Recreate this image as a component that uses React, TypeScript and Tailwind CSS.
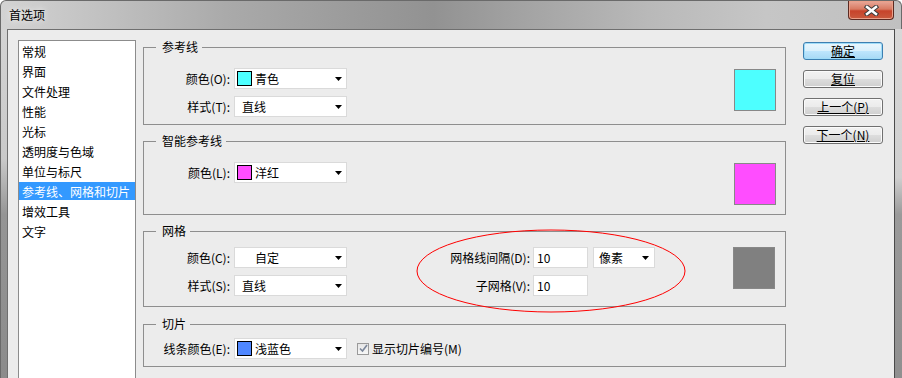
import React from "react";

const listItems = [
  "常规",
  "界面",
  "文件处理",
  "性能",
  "光标",
  "透明度与色域",
  "单位与标尺",
  "参考线、网格和切片",
  "增效工具",
  "文字",
];

function Arrow() {
  return (
    <svg width="7" height="4" viewBox="0 0 7 4" className="shrink-0">
      <path d="M0 0H7L3.5 4Z" fill="#000" />
    </svg>
  );
}

function Select({ swatch, text, blank }: { swatch?: string; text: string; blank?: boolean }) {
  return (
    <div className="flex h-[21px] w-[113px] items-center border border-[#dadada] bg-white pr-[4px]">
      {swatch || blank ? (
        <>
          <div
            className={"ml-[2px] h-[15px] w-[15px] shrink-0 " + (swatch ? "border border-black" : "")}
            style={swatch ? { backgroundColor: swatch } : undefined}
          />
          <span className="ml-[3px]">{text}</span>
        </>
      ) : (
        <span className="ml-[7px]">{text}</span>
      )}
      <div className="ml-auto">
        <Arrow />
      </div>
    </div>
  );
}

function Label({ children }: { children: React.ReactNode }) {
  return <div className="w-[90px] shrink-0 pr-[4px] text-right">{children}</div>;
}

function Group({ title, className, children }: { title: string; className: string; children: React.ReactNode }) {
  return (
    <fieldset className={"border border-[#8e8e8e] " + className}>
      <legend className="ml-[12px] pl-[6px] pr-[4px] leading-[16px]">{title}</legend>
      {children}
    </fieldset>
  );
}

function Swatch({ color }: { color: string }) {
  return (
    <div
      className="ml-auto mr-[9px] mt-[1px] h-[42px] w-[42px] shrink-0 border border-[#888888]"
      style={{ backgroundColor: color }}
    />
  );
}

function Button({ label, primary }: { label: string; primary?: boolean }) {
  return (
    <button
      className={
        primary
          ? "flex h-[18px] w-[80px] items-center justify-center rounded-[3px] border border-[#3c7fb1] bg-[linear-gradient(180deg,#eaf6fd_0%,#d9f0fc_50%,#bee6fd_51%,#a7d9f5_100%)] shadow-[inset_0_0_0_1px_#9fdcf8]"
          : "flex h-[18px] w-[80px] items-center justify-center rounded-[3px] border border-[#707070] bg-[linear-gradient(180deg,#f2f2f2_0%,#ebebeb_50%,#dddddd_51%,#cfcfcf_100%)] shadow-[inset_0_0_0_1px_#fbfbfb]"
      }
    >
      <span className="leading-[14px] underline decoration-1 underline-offset-[1px]">{label}</span>
    </button>
  );
}

export default function App() {
  return (
    <div className="relative flex h-[378px] w-[902px] flex-col overflow-hidden bg-white text-[12px] leading-[16px] text-black [font-family:'Noto_Sans_CJK_SC',sans-serif]">
      {/* Title bar */}
      <div className="flex h-[29px] shrink-0 rounded-t-[6px] border-t border-l border-r border-[#6a6a6a] bg-[linear-gradient(90deg,#d3d3d3_0%,#c0c0c0_12%,#aaaaaa_25%,#9c9c9c_38%,#929292_48%,#a3a3a3_58%,#b9b9b9_72%,#c6c6c6_85%,#c0c0c0_100%)]">
        <span className="self-center pl-[8px] [text-shadow:0_0_6px_#ffffff]">首选项</span>
        <div className="ml-auto mr-[7px] flex h-[19px] w-[46px] items-center justify-center rounded-b-[4px] border border-t-0 border-[#5b2a22] bg-[linear-gradient(180deg,#e9a99a_0%,#d87a62_45%,#c7432b_55%,#c95a3e_100%)] shadow-[inset_0_0_0_1px_#eaa08a]">
          <svg width="15" height="11" viewBox="0 0 15 11">
            <path d="M3 2L12 9M12 2L3 9" stroke="#3b3b3b" strokeWidth="4.5" strokeLinecap="square" />
            <path d="M3 2L12 9M12 2L3 9" stroke="#ffffff" strokeWidth="2.5" strokeLinecap="square" />
          </svg>
        </div>
      </div>

      <div className="flex flex-1">
        {/* left frame */}
        <div className="w-[7px] shrink-0 border-l border-[#6a6a6a] bg-[linear-gradient(180deg,#d4d4d4_0%,#c9c9c9_35%,#959595_50%,#8a8a8a_100%)]" />

        {/* client */}
        <div className="flex flex-1 items-start border-l border-t border-[#6f6f6f] bg-[#ececec] pl-[10px]">
          {/* category list */}
          <div className="mt-[10px] h-[360px] w-[118px] shrink-0 border border-[#8c8c8c] bg-white pt-[1px]">
            {listItems.map((item, i) => (
              <div
                key={item}
                className={
                  i === 7
                    ? "mb-[2px] h-[18px] whitespace-nowrap bg-[#3399ff] pl-[3px] leading-[20px] text-white"
                    : "mb-[2px] h-[18px] whitespace-nowrap pl-[3px] leading-[20px]"
                }
              >
                {item}
              </div>
            ))}
          </div>

          {/* groups */}
          <div className="ml-[7px] mt-[9px] flex w-[643px] shrink-0 flex-col gap-2">
            <Group title="参考线" className="pt-[13px] pb-[7px]">
              <div className="flex items-start">
                <div className="flex flex-col gap-[7px]">
                  <div className="flex h-[21px] items-center">
                    <Label>颜色(O):</Label>
                    <Select swatch="#4dffff" text="青色" />
                  </div>
                  <div className="flex h-[21px] items-center">
                    <Label>样式(T):</Label>
                    <Select text="直线" />
                  </div>
                </div>
                <Swatch color="#4dffff" />
              </div>
            </Group>

            <Group title="智能参考线" className="pt-[13px] pb-[9px]">
              <div className="flex items-start">
                <div className="flex h-[21px] items-center">
                  <Label>颜色(L):</Label>
                  <Select swatch="#ff4dff" text="洋红" />
                </div>
                <Swatch color="#ff4dff" />
              </div>
            </Group>

            <Group title="网格" className="pt-[8px] pb-[10px]">
              <div className="flex items-start">
                <div className="flex flex-col gap-[7px]">
                  <div className="flex h-[21px] items-center">
                    <Label>颜色(C):</Label>
                    <Select blank text="自定" />
                  </div>
                  <div className="flex h-[21px] items-center">
                    <Label>样式(S):</Label>
                    <Select text="直线" />
                  </div>
                </div>
                <div className="ml-[86px] flex flex-col gap-[7px]">
                  <div className="flex h-[21px] items-center">
                    <div className="w-[100px] shrink-0 pr-[3px] text-right">网格线间隔(D):</div>
                    <div className="flex h-[21px] w-[55px] items-center border border-[#dadada] bg-white pl-[3px]">10</div>
                    <div className="ml-[5px] flex h-[21px] w-[62px] items-center border border-[#dadada] bg-white pl-[5px] pr-[5px]">
                      <span>像素</span>
                      <div className="ml-auto">
                        <Arrow />
                      </div>
                    </div>
                  </div>
                  <div className="flex h-[21px] items-center">
                    <div className="w-[100px] shrink-0 pr-[3px] text-right">子网格(V):</div>
                    <div className="flex h-[21px] w-[55px] items-center border border-[#dadada] bg-white pl-[3px]">10</div>
                  </div>
                </div>
                <div className="ml-auto mr-[10px] h-[42px] w-[42px] shrink-0 border border-[#888888] bg-[#808080]" />
              </div>
            </Group>

            <Group title="切片" className="mt-[1px] pt-[6px] pb-[7px]">
              <div className="flex h-[21px] items-center">
                <Label>线条颜色(E):</Label>
                <Select swatch="#4f87ff" text="浅蓝色" />
                <div className="ml-[10px] flex h-[12px] w-[12px] items-center justify-center border border-[#9a9a9a] bg-[linear-gradient(180deg,#e6e6e6,#f7f7f7)]">
                  <svg width="9" height="9" viewBox="0 0 9 9">
                    <path d="M1 4.5L3.5 7L8 1" stroke="#7b869a" strokeWidth="1.6" fill="none" />
                  </svg>
                </div>
                <span className="ml-[3px]">显示切片编号(M)</span>
              </div>
            </Group>
          </div>

          {/* buttons */}
          <div className="ml-[17px] mt-[12px] flex w-[80px] shrink-0 flex-col gap-[10px]">
            <Button label="确定" primary />
            <Button label="复位" />
            <Button label="上一个(P)" />
            <Button label="下一个(N)" />
          </div>
        </div>

        {/* right frame */}
        <div className="w-[8px] shrink-0 border-l border-[#4a4a4a] bg-[linear-gradient(180deg,#d8d8d8_0%,#cfcfcf_40%,#9a9a9a_50%,#8e8e8e_100%)]" />
      </div>

      {/* red annotation ellipse */}
      <svg className="pointer-events-none absolute left-[416px] top-[229px]" width="270" height="84" viewBox="0 0 270 84">
        <ellipse cx="135" cy="42" rx="134" ry="41" fill="none" stroke="#ff0000" strokeWidth="1" />
      </svg>
    </div>
  );
}
